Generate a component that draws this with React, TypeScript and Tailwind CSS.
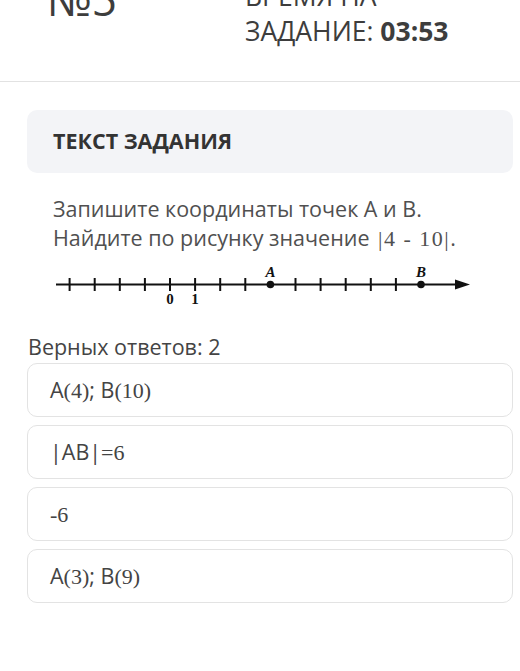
import React from 'react';

const sans = { fontFamily: '"Open Sans", "Noto Sans", sans-serif' };
const serif = 'font-["Liberation_Serif",serif] text-[22px]';

const NumberLine = () => {
  const unit = 25.1;
  const zero = 170;
  const ticks = [-4, -3, -2, -1, 0, 1, 2, 3, 5, 6, 7, 8, 9];
  return (
    <svg width="430" height="44" viewBox="50 265 430 44" className="block">
      <line x1="56" y1="284.5" x2="462" y2="284.5" stroke="#111" strokeWidth="2.2" />
      <polygon points="470,284.5 455,279.5 455,289.5" fill="#111" />
      {ticks.map(t => (
        <line
          key={t}
          x1={zero + t * unit}
          x2={zero + t * unit}
          y1="278"
          y2="291"
          stroke="#111"
          strokeWidth="2"
        />
      ))}
      <circle cx={zero + 4 * unit} cy="284.5" r="3.8" fill="#111" />
      <circle cx={zero + 10 * unit} cy="284.5" r="3.8" fill="#111" />
      <text x={zero + 4 * unit} y="277" textAnchor="middle" fontFamily="Liberation Serif, serif" fontStyle="italic" fontWeight="bold" fontSize="15" fill="#111">A</text>
      <text x={zero + 10 * unit} y="277" textAnchor="middle" fontFamily="Liberation Serif, serif" fontStyle="italic" fontWeight="bold" fontSize="15" fill="#111">B</text>
      <text x={zero} y="304" textAnchor="middle" fontFamily="Liberation Serif, serif" fontWeight="bold" fontSize="15" fill="#111">0</text>
      <text x={zero + unit} y="304" textAnchor="middle" fontFamily="Liberation Serif, serif" fontWeight="bold" fontSize="15" fill="#111">1</text>
    </svg>
  );
};

const Answer = ({ children }: { children: React.ReactNode }) => (
  <div className="h-[54px] flex items-center px-[22px] rounded-[10px] border border-[#e3e3e3] bg-white text-[21.5px] text-[#444]">
    {children}
  </div>
);

const App = () => {
  return (
    <div className="w-[520px] h-[671px] overflow-hidden bg-white" style={sans}>
      {/* Header */}
      <div className="flex h-[82px] border-b border-[#e2e2e2]">
        <div className="w-[245px] pl-[47px] -mt-[21px] text-[44px] leading-[40px] text-[#3d3d3d]">№5</div>
        <div className="-mt-[21px] text-[26.5px] leading-[35px] text-[#3d3d3d]">
          <div>ВРЕМЯ НА</div>
          <div>
            ЗАДАНИЕ: <span className="font-bold">03:53</span>
          </div>
        </div>
      </div>

      <div className="px-[27px] pt-[28px] pr-[7px]">
        {/* Task card */}
        <div className="h-[63px] flex items-center px-[26px] rounded-[10px] bg-[#f3f4f7]">
          <span className="text-[21.5px] font-bold text-[#333]">ТЕКСТ ЗАДАНИЯ</span>
        </div>

        <div className="pl-[26px] pt-[21px] text-[21.5px] leading-[29px] text-[#505050]">
          <p>Запишите координаты точек A и B.</p>
          <p>
            Найдите по рисунку значение{' '}
            <span className={`${serif} ml-[3px] tracking-[1.5px]`}>|4 - 10|</span>.
          </p>
        </div>

        <div className="pl-[23px] pt-[12px]">
          <NumberLine />
        </div>

        <div className="pt-[24px] pl-[1px] text-[21.5px] leading-[28px] text-[#444]">Верных ответов: 2</div>

        <div className="flex flex-col gap-[8px] pt-[2px]">
          <Answer>
            A<span className={serif}>(4)</span>; B<span className={serif}>(10)</span>
          </Answer>
          <Answer>
            |AB|<span className={serif}>=6</span>
          </Answer>
          <Answer>
            <span className={serif}>-6</span>
          </Answer>
          <Answer>
            A<span className={serif}>(3)</span>; B<span className={serif}>(9)</span>
          </Answer>
        </div>
      </div>
    </div>
  );
};

export default App;
